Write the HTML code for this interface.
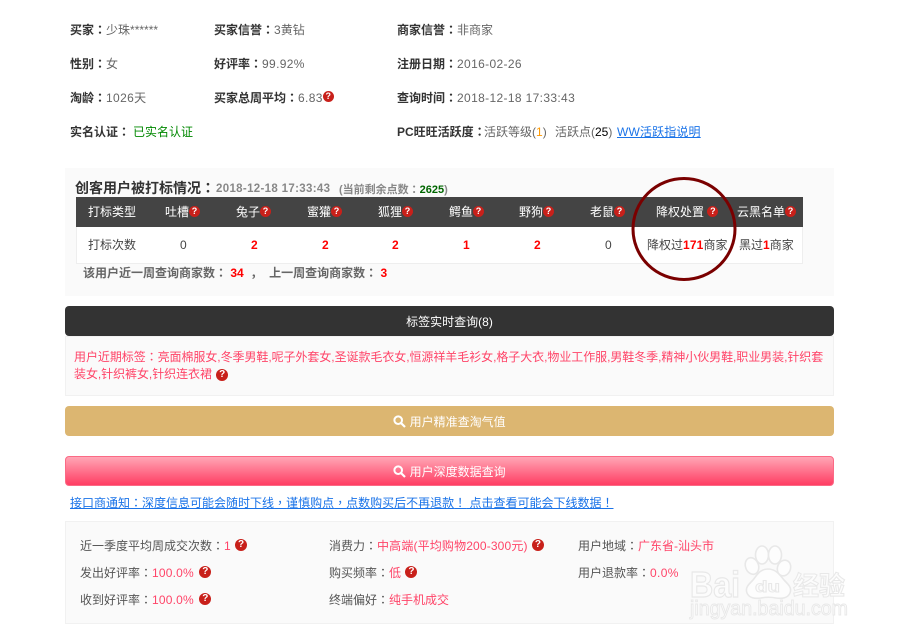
<!DOCTYPE html>
<html><head><meta charset="utf-8">
<style>
html,body{margin:0;padding:0;background:#fff}
#p{position:relative;width:899px;height:643px;overflow:hidden;font:12px/18px "Liberation Sans","Noto Sans CJK SC",sans-serif;color:#666}
#p div{position:absolute;white-space:nowrap}
b{font-weight:700}
i{font-style:normal;font-family:"Noto Sans CJK TC",sans-serif}
.k{color:#333;font-weight:700}
.n{letter-spacing:.35px}
.q{display:inline-block;width:11px;height:11px;border-radius:50%;background:#c8201a;color:#fff;font:bold 9px/11px "Liberation Sans",sans-serif;text-align:center;letter-spacing:0;vertical-align:2px}
.q2{width:12px;height:12px;line-height:12px;font-size:10px;vertical-align:3px;margin-left:1px}
.w{color:#fff}
.r{color:#f00;font-weight:700}
.d{color:#444}
.p{color:#ff4468}
.g{color:#555}
.box{background:#fafafa;border:1px solid #f1f1f1;box-sizing:border-box}
a{color:#1a73e8;text-decoration:underline}
</style></head><body><div id="p">
<div style="left:70px;top:21px"><span class="k">买家<i>：</i></span>少珠******</div>
<div style="left:214px;top:21px"><span class="k">买家信誉<i>：</i></span>3黄钻</div>
<div style="left:397px;top:21px"><span class="k">商家信誉<i>：</i></span>非商家</div>
<div style="left:70px;top:55px"><span class="k">性别<i>：</i></span>女</div>
<div style="left:214px;top:55px"><span class="k">好评率<i>：</i></span><span class="n">99.92%</span></div>
<div style="left:397px;top:55px"><span class="k">注册日期<i>：</i></span><span class="n">2016-02-26</span></div>
<div style="left:70px;top:89px"><span class="k">淘龄<i>：</i></span><span class="n">1026</span>天</div>
<div style="left:214px;top:89px"><span class="k">买家总周平均<i>：</i></span><span class="n">6.83</span><span class="q" style="vertical-align:3px">?</span></div>
<div style="left:397px;top:89px"><span class="k">查询时间<i>：</i></span><span class="n">2018-12-18 17:33:43</span></div>
<div style="left:70px;top:123px"><span class="k">实名认证<i>：</i></span></div>
<div style="left:133px;top:123px;color:#080">已实名认证</div>
<div style="left:397px;top:123px"><span class="k">PC旺旺活跃度<i>：</i></span></div>
<div style="left:484px;top:123px">活跃等级(<span style="color:#f90">1</span>)</div>
<div style="left:555px;top:123px">活跃点(<span style="color:#000">25</span>)</div>
<div style="left:617px;top:123px"><a style="letter-spacing:.15px">WW活跃指说明</a></div>

<div style="left:65px;top:168px;width:769px;height:128px;background:#fafafa"></div>
<div style="left:75px;top:179px;font-size:14px;font-weight:700;color:#333">创客用户被打标情况<i>：</i></div>
<div style="left:216px;top:180px;font-size:11.5px;font-weight:700;color:#888;letter-spacing:.33px">2018-12-18 17:33:43</div>
<div style="left:339px;top:180px;font-size:11px;font-weight:700;color:#888">(当前剩余点数<i>：</i><span style="color:#060">2625</span>)</div>
<div style="left:76px;top:197px;width:727px;height:30px;background:#444"></div>
<div style="left:76px;top:227px;width:727px;height:37px;background:#fff;border-bottom:1px solid #eee;border-left:1px solid #eee;border-right:1px solid #eee;box-sizing:border-box"></div>
<div class="w" style="left:88px;top:203px">打标类型</div>
<div class="w" style="left:165px;top:203px">吐槽<span class="q">?</span></div>
<div class="w" style="left:236px;top:203px">兔子<span class="q">?</span></div>
<div class="w" style="left:307px;top:203px">蜜獾<span class="q">?</span></div>
<div class="w" style="left:378px;top:203px">狐狸<span class="q">?</span></div>
<div class="w" style="left:449px;top:203px">鳄鱼<span class="q">?</span></div>
<div class="w" style="left:519px;top:203px">野狗<span class="q">?</span></div>
<div class="w" style="left:590px;top:203px">老鼠<span class="q">?</span></div>
<div class="w" style="left:656px;top:203px">降权处置 <span class="q">?</span></div>
<div class="w" style="left:737px;top:203px">云黑名单<span class="q">?</span></div>
<div class="d" style="left:88px;top:236px">打标次数</div>
<div class="d" style="left:180px;top:236px">0</div>
<div class="r" style="left:251px;top:236px">2</div>
<div class="r" style="left:322px;top:236px">2</div>
<div class="r" style="left:392px;top:236px">2</div>
<div class="r" style="left:463px;top:236px">1</div>
<div class="r" style="left:534px;top:236px">2</div>
<div class="d" style="left:605px;top:236px">0</div>
<div class="d" style="left:647px;top:236px">降权过<span class="r" style="letter-spacing:.15px">171</span>商家</div>
<div class="d" style="left:739px;top:236px">黑过<span class="r">1</span>商家</div>
<div style="left:83px;top:264px;font-weight:700;color:#666">该用户近一周查询商家数<i>：</i> <span class="r">34</span> &nbsp;， &nbsp;上一周查询商家数<i>：</i> <span class="r">3</span></div>
<svg style="position:absolute;left:625px;top:170px" width="120" height="120"><ellipse cx="59" cy="59" rx="51" ry="50.5" fill="none" stroke="#7a0000" stroke-width="3"/></svg>

<div style="left:65px;top:306px;width:769px;height:30px;background:#333;border-radius:4px;color:#fff;text-align:center;line-height:33px">标签实时查询(8)</div>
<div class="box" style="left:65px;top:336px;width:769px;height:60px"></div>
<div class="p" style="left:74px;top:349px;line-height:16.5px;letter-spacing:-.06px">用户近期标签<i>：</i>亮面棉服女,冬季男鞋,呢子外套女,圣诞款毛衣女,恒源祥羊毛衫女,格子大衣,物业工作服,男鞋冬季,精神小伙男鞋,职业男装,针织套<br>装女,针织裤女,针织连衣裙 <span class="q q2" style="vertical-align:1px">?</span></div>
<div style="left:65px;top:406px;width:769px;height:30px;background:#dcb671;border-radius:4px;color:#fff;text-align:center;line-height:32px"><svg width="13" height="13" viewBox="0 0 13 13" style="vertical-align:-2px"><circle cx="5.2" cy="5.2" r="3.8" fill="none" stroke="#fff" stroke-width="2"/><path d="M8 8l4 4" stroke="#fff" stroke-width="2.2"/></svg> 用户精准查淘气值</div>
<div style="left:65px;top:456px;width:769px;height:30px;box-sizing:border-box;border:1px solid #fb6a85;background:linear-gradient(#ffa6b5,#ff3d63);border-radius:4px;color:#fff;text-align:center;line-height:30px"><svg width="13" height="13" viewBox="0 0 13 13" style="vertical-align:-2px"><circle cx="5.2" cy="5.2" r="3.8" fill="none" stroke="#fff" stroke-width="2"/><path d="M8 8l4 4" stroke="#fff" stroke-width="2.2"/></svg> 用户深度数据查询</div>
<div style="left:70px;top:494px"><a>接口商通知<i>：</i>深度信息可能会随时下线<i>，</i>谨慎购点<i>，</i>点数购买后不再退款<i>！</i> 点击查看可能会下线数据<i>！</i></a></div>

<div class="box" style="left:65px;top:521px;width:769px;height:103px"></div>
<div class="g" style="left:80px;top:537px">近一季度平均周成交次数<i>：</i><span class="p">1</span> <span class="q q2">?</span></div>
<div class="g" style="left:80px;top:564px">发出好评率<i>：</i><span class="p" style="letter-spacing:.2px">100.0%</span> <span class="q q2" style="margin-left:2px">?</span></div>
<div class="g" style="left:80px;top:591px">收到好评率<i>：</i><span class="p" style="letter-spacing:.2px">100.0%</span> <span class="q q2" style="margin-left:2px">?</span></div>
<div class="g" style="left:329px;top:537px">消费力<i>：</i><span class="p" style="letter-spacing:.15px">中高端(平均购物200-300元)</span> <span class="q q2">?</span></div>
<div class="g" style="left:329px;top:564px">购买频率<i>：</i><span class="p">低</span> <span class="q q2">?</span></div>
<div class="g" style="left:329px;top:591px">终端偏好<i>：</i><span class="p">纯手机成交</span></div>
<div class="g" style="left:578px;top:537px">用户地域<i>：</i><span class="p">广东省-汕头市</span></div>
<div class="g" style="left:578px;top:564px">用户退款率<i>：</i><span class="p n">0.0%</span></div>

<svg style="position:absolute;left:680px;top:535px" width="170" height="100" fill="none" stroke="#e8e8e8" stroke-width="1.6">
<ellipse cx="72" cy="31" rx="6.5" ry="8.5" transform="rotate(-20 72 31)" fill="#fdfdfd"/>
<ellipse cx="82" cy="20" rx="6.5" ry="9" fill="#fdfdfd"/>
<ellipse cx="95" cy="20" rx="6.5" ry="9" fill="#fdfdfd"/>
<ellipse cx="104" cy="33" rx="6.5" ry="8" transform="rotate(20 104 33)" fill="#fdfdfd"/>
<path d="M88 34c-8 0-11 6-15 11-5 5-8 8-6 13 2 5 8 6 14 5 5-1 10-1 15 0 6 1 12 0 14-5 2-5-1-8-6-13-4-5-8-11-16-11z" fill="#fdfdfd"/>
<text x="10" y="62" textLength="50" lengthAdjust="spacingAndGlyphs" font-family="Liberation Sans" font-weight="700" font-size="36" fill="#fcfcfc" stroke-width="1.2">Bai</text>
<text x="75" y="57" textLength="25" lengthAdjust="spacingAndGlyphs" font-family="Liberation Sans" font-weight="700" font-size="16" fill="#fcfcfc" stroke-width=".9">du</text>
<text x="113" y="60" font-family="Noto Sans CJK SC" font-weight="700" font-size="26" fill="#fcfcfc" stroke-width="1">经验</text>
<text x="10" y="80" textLength="158" lengthAdjust="spacingAndGlyphs" font-family="Liberation Sans" font-size="20" fill="#fcfcfc" stroke-width=".9">jingyan.baidu.com</text>
</svg>
</div></body></html>
